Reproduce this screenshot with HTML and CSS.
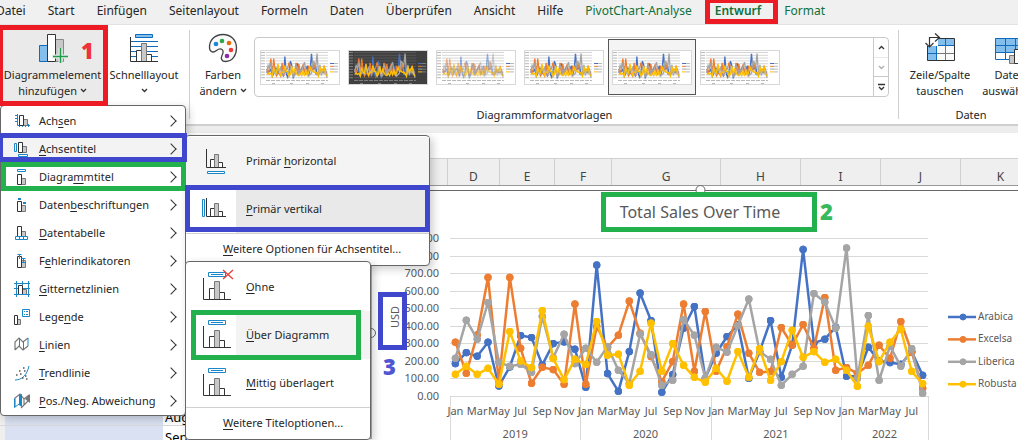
FILE: index.html
```html
<!DOCTYPE html>
<html lang="de">
<head>
<meta charset="utf-8">
<title>Total Sales Over Time</title>
<link rel="stylesheet" href="styles.css">
</head>
<body>
<nav class="tabs">
  <a href="#">Datei</a><a href="#">Start</a><a href="#">Einfügen</a><a href="#">Seitenlayout</a><a href="#">Formeln</a><a href="#">Daten</a><a href="#">Überprüfen</a><a href="#">Ansicht</a><a href="#">Hilfe</a><a href="#" class="ctx">PivotChart-Analyse</a><a href="#" class="ctx active">Entwurf</a><a href="#" class="ctx">Format</a>
</nav>

<section class="ribbon">
  <div class="group layouts">
    <button class="big pressed">
      <svg width="30" height="30" viewBox="0 0 30 30"><path d="M1.500 12.500h8v16h-8z" fill="#83beec" stroke="#0f6cbd"/><path d="M17.500 6.500h8v22h-8z" fill="#c8c8c8" stroke="#888"/><path d="M9.500 1.500h8v27h-8z" fill="#fff" stroke="#333"/><path d="M22.500 15v17M14 23.500h16" stroke="#eaeaea" stroke-width="4"/><path d="M22.500 15v15M15 23.500h15" stroke="#1e9e48" stroke-width="1.500"/></svg>
      <span>Diagrammelement<br>hinzufügen <svg class="chev" width="7" height="5" viewBox="0 0 7 5"><path d="M1 1l2.500 2.500L6 1"/></svg></span>
    </button>
    <button class="big quick">
      <svg width="30" height="30" viewBox="0 0 30 30"><path d="M6.500 1.500h17v3h-17z" fill="#83beec" stroke="#0f6cbd"/><path d="M2 8.500h27M2 13.500h27M2 18.500h27M2 23.500h27" stroke="#0f6cbd"/><path d="M7.500 17.500h5v11h-5zM17.500 21.500h5v7h-5z" fill="#fff" stroke="#333"/><path d="M12.500 10.500h5v18h-5z" fill="#c8c8c8" stroke="#777"/><path d="M1.500 4v24.500H29" fill="none" stroke="#333"/></svg>
      <span>Schnelllayout<br><svg class="chev" width="7" height="5" viewBox="0 0 7 5"><path d="M1 1l2.500 2.500L6 1"/></svg></span>
    </button>
  </div>
  <div class="group styles">
    <div class="row">
      <button class="big colors">
        <svg width="30" height="30" viewBox="0 0 30 30"><path d="M1.500 15C1 7 7 1.500 15 1.500S28.500 7 28.500 15c0 7-4 13.500-11 13.500-4 0-5-3-3.500-6s2-4.500 0-6c-2-1.400-3.500-.5-5.500 1-3 2.500-6.500 2-7-2.500z" fill="#fafafa" stroke="#444" stroke-width="1.300"/><circle cx="8" cy="11" r="2.300" fill="#1b87d6"/><circle cx="14" cy="8" r="2.300" fill="#2ba84a"/><circle cx="21" cy="10" r="2.300" fill="#e86c00"/><circle cx="23" cy="17" r="2.300" fill="#ee3a3a"/><circle cx="19" cy="23" r="2.300" fill="#9029a8"/></svg>
        <span>Farben<br>ändern <svg class="chev" width="7" height="5" viewBox="0 0 7 5"><path d="M1 1l2.500 2.500L6 1"/></svg></span>
      </button>
      <div class="gallery">
        <div class="thumbs" id="thumbs"></div>
        <div class="spin">
          <button aria-label="Nach oben"><svg class="chev" width="7" height="5" viewBox="0 0 7 5"><path d="M1 4l2.500-2.500L6 4"/></svg></button>
          <button aria-label="Nach unten" disabled><svg class="chev" width="7" height="5" viewBox="0 0 7 5"><path d="M1 1l2.500 2.500L6 1"/></svg></button>
          <button aria-label="Weitere"><svg class="chev" width="7" height="8" viewBox="0 0 7 8"><path d="M0 1.500h7M1 4l2.500 2.500L6 4"/></svg></button>
        </div>
      </div>
    </div>
    <div class="caption">Diagrammformatvorlagen</div>
  </div>
  <div class="group data">
    <div class="row">
      <button class="big swap">
        <svg width="32" height="30" viewBox="0 0 32 30"><path d="M3.500 5.500h27v22h-27z" fill="#fafafa"/><path d="M3.500 5.500h27v7h-18v15h-9z" fill="#83beec"/><path d="M12.500 5.500v22M21.500 5.500v22M3.500 12.500h27M3.500 20.500h27" stroke="#777"/><path d="M12.500 5.500v22M3.500 12.500h27M3.500 20.500h9M21.500 5.500v7" stroke="#0f6cbd"/><path d="M3.500 5.500h27v22h-27z" fill="none" stroke="#333"/><path d="M0 0h14v13H0z" fill="#fff"/><path d="M5.500 14V4.500H15M11 .500l4.500 4-4.500 4M1.500 10l4 4 4-4" fill="none" stroke="#333" stroke-width="1.200"/></svg>
        <span>Zeile/Spalte<br>tauschen</span>
      </button>
      <button class="big select">
        <svg width="32" height="30" viewBox="0 0 32 30"><path d="M1.500 5.500h30v21h-30z" fill="#fff" stroke="#0f6cbd"/><path d="M2 6h29v13H2z" fill="#83beec"/><path d="M1.500 5.500h30M1.500 12.500h30M1.500 19.500h30M11.500 5.500v21M21.500 5.500v14" fill="none" stroke="#0f6cbd"/><path d="M15.500 22.500h5v8h-5z" fill="#c8c8c8" stroke="#777"/><path d="M20.500 16.500h5v14h-5z" fill="#fff" stroke="#333"/><path d="M25.500 19.500h5v11h-5z" fill="#83beec" stroke="#0f6cbd"/></svg>
        <span>Daten<br>auswählen</span>
      </button>
    </div>
    <div class="caption">Daten</div>
  </div>
</section>

<div class="formula"></div>

<main class="sheet">
  <div class="heads"><span class="c0"></span><span>D</span><span class="e">E</span><span class="f">F</span><span class="g">G</span><span class="h">H</span><span class="i">I</span><span class="i">J</span><span class="k">K</span></div>
  <div class="body">
    <div class="cells" id="cells"></div>
    <svg class="chart" id="chart" viewBox="0 0 653 250" role="img" aria-label="Total Sales Over Time">
      <defs>
        <marker id="m0" class="s0" markerUnits="userSpaceOnUse" markerWidth="8" markerHeight="8" refX="4" refY="4"><circle cx="4" cy="4" r="3.500"/></marker>
        <marker id="m1" class="s1" markerUnits="userSpaceOnUse" markerWidth="8" markerHeight="8" refX="4" refY="4"><circle cx="4" cy="4" r="3.500"/></marker>
        <marker id="m2" class="s2" markerUnits="userSpaceOnUse" markerWidth="8" markerHeight="8" refX="4" refY="4"><circle cx="4" cy="4" r="3.500"/></marker>
        <marker id="m3" class="s3" markerUnits="userSpaceOnUse" markerWidth="8" markerHeight="8" refX="4" refY="4"><circle cx="4" cy="4" r="3.500"/></marker>
      </defs>
    </svg>
  </div>
</main>

<div class="menu main-menu" role="menu">
  <button><svg viewBox="0 0 16 16"><path d="M3.500 1v11.500H16M1 2.500h3M1 5.500h3M1 8.500h3M5.500 11v3M8.500 11v3M11.500 11v3M14.500 11v3" class="b"/><path d="M9.500 6.500h4v6h-4z" class="g"/><path d="M5.500 2.500h4v10h-4z" class="k"/></svg><span>Ach<u>s</u>en</span></button>
  <button class="hot"><svg viewBox="0 0 16 16"><path d="M.500 2.500h2v8h-2zM4.500 13.500h9v2h-9z" class="b w"/><path d="M8.500 5.500h4v6h-4z" class="g"/><path d="M4.500 1.500h4v10h-4z" class="k"/></svg><span><u>A</u>chsentitel</span></button>
  <button><svg viewBox="0 0 16 16"><path d="M3.500.500h8v2h-8z" class="b w"/><path d="M7.500 9.500h4v6h-4z" class="g"/><path d="M3.500 5.500h4v10h-4z" class="k"/></svg><span>Diagra<u>m</u>mtitel</span></button>
  <button><svg viewBox="0 0 16 16"><path d="M4 2h3M9 6h3" class="b thick"/><path d="M7.500 8.500h4v6h-4z" class="g"/><path d="M3.500 4.500h4v10h-4z" class="k"/></svg><span>Daten<u>b</u>eschriftungen</span></button>
  <button><svg viewBox="0 0 16 16"><path d="M7.500 6.500h4v5h-4z" class="g"/><path d="M3.500 1.500h4v10h-4z" class="k"/><path d="M1.500 11.500h12v3h-12zM5.500 11.500v3M9.500 11.500v3" class="b w"/></svg><span><u>D</u>atentabelle</span></button>
  <button><svg viewBox="0 0 16 16"><path d="M7.500 7.500h4v7h-4z" class="g"/><path d="M3.500 3.500h4v11h-4z" class="k"/><path d="M5.500 1v5M3.500 1.500h4M9.500 5v5M7.500 5.500h4M8 9.500h3" class="b"/></svg><span>F<u>e</u>hlerindikatoren</span></button>
  <button><svg viewBox="0 0 16 16"><path d="M8.500 8.500h4v5h-4z" class="g"/><path d="M4.500 4.500h4v9h-4z" class="k"/><path d="M0 2.500h16M0 13.500h16M2.500 0v16M8.500 0v4M14.500 0v16M0 7.500h4M9 7.500h7" class="b"/></svg><span><u>G</u>itternetzlinien</span></button>
  <button><svg viewBox="0 0 16 16"><path d="M8.500.500h7v7h-7z" class="b w"/><path d="M10 2.500h1M12 2.500h2M10 5.500h1M12 5.500h2" class="b"/><path d="M3.500 10.500h3v5h-3z" class="g"/><path d="M.500 6.500h3v9h-3z" class="k"/></svg><span>Lege<u>n</u>de</span></button>
  <button><svg viewBox="0 0 16 16"><path d="M1 13V5l4-4 4 4 5-4M1 13l4-4 4 4 5-4" class="l"/><path d="M5.500 1v8M9.500 5v8M14 1v8" class="b"/></svg><span><u>L</u>inien</span></button>
  <button><svg viewBox="0 0 16 16"><path d="M1 15C8 15 13 10 15 1" class="b"/><path d="M2 10h1.500M5 6h1.500M6 9h1.500M9 3h1.500M8 13h1.500M11 11h1.500M12 14h1.500M10 6h1.500" class="dot"/></svg><span><u>T</u>rendlinie</span></button>
  <button><svg viewBox="0 0 16 16"><path d="M1 14V5l5-4 4 5v6l-3 3M10 6l5-4M10 12l5-5" class="l"/><path d="M5 2l3-1v13l-3-2z" fill="#1b87c9"/><path d="M.500 5.500v9L5 11" class="b"/><path d="M11 6l5-5v9z" fill="#777"/></svg><span><u>P</u>os./Neg. Abweichung</span></button>
</div>

<div class="menu sub axis" role="menu">
  <button class="item hover"><svg viewBox="0 0 28 28"><path d="M7.500 12.500h4v8h-4zM15.500 15.500h4v5h-4z" class="k"/><path d="M11.500 7.500h4v13h-4z" class="g"/><path d="M3.500 2v18.500H23" class="k n"/><path d="M4.500 24.500h17v2h-17z" class="b w"/></svg><span>Primär <u>h</u>orizontal</span></button>
  <button class="item chosen"><svg viewBox="0 0 28 28"><path d="M7.500 13.500h4v8h-4zM15.500 16.500h4v5h-4z" class="k"/><path d="M11.500 8.500h4v13h-4z" class="g"/><path d="M3.500 3v18.500H23" class="k n"/><path d="M-.500 4.500h2v17h-2z" class="b w"/></svg><span><u>P</u>rimär vertikal</span></button>
  <button class="more"><span><u>W</u>eitere Optionen für Achsentitel...</span></button>
</div>

<div class="menu sub title" role="menu">
  <button class="item"><svg viewBox="0 0 28 28"><path d="M6.500 15.500h5v11h-5zM16.500 19.500h5v7h-5z" class="k"/><path d="M11.500 8.500h5v18h-5z" class="g"/><path d="M.500 5v21.500H28" class="k n"/><path d="M5.500-.500h17v4h-17zM8 1.500h12" class="b w"/><path d="M20-3l10 9M30-3L20 6" stroke="#ee3a3a" stroke-width="1.300"/></svg><span><u>O</u>hne</span></button>
  <button class="item chosen"><svg viewBox="0 0 28 28"><path d="M6.500 15.500h5v11h-5zM16.500 19.500h5v7h-5z" class="k"/><path d="M11.500 9.500h5v17h-5z" class="g"/><path d="M.500 5v21.500H28" class="k n"/><path d="M5.500-.500h17v4h-17zM8 1.500h12" class="b w"/></svg><span><u>Ü</u>ber Diagramm</span></button>
  <button class="item"><svg viewBox="0 0 28 28"><path d="M6.500 15.500h5v11h-5zM16.500 19.500h5v7h-5z" class="k"/><path d="M11.500 9.500h5v17h-5z" class="g"/><path d="M.500 5v21.500H28" class="k n"/><path d="M5.500-.500h17v4h-17zM8 1.500h12" class="b w"/></svg><span><u>M</u>ittig überlagert</span></button>
  <button class="more"><span><u>W</u>eitere Titeloptionen...</span></button>
</div>

<div class="mark red m-add"></div>
<div class="mark red m-tab"></div>
<div class="mark blue m-axis"></div>
<div class="mark green m-title"></div>
<div class="mark blue m-vert"></div>
<div class="mark green m-over"></div>
<div class="mark green m-heading"></div>
<div class="mark blue m-usd"></div>
<b class="num n1">1</b>
<b class="num n2">2</b>
<b class="num n3">3</b>
<script src="chart.js"></script>
</body>
</html>
```
FILE: styles.css
```css
* { box-sizing: border-box; }
body {
  margin: 0;
  position: relative;
  min-height: 100vh;
  overflow: hidden;
  background: #fff;
  color: #262626;
  font: 12px/16px "Noto Sans", "Open Sans", sans-serif;
  display: flex;
  flex-direction: column;
}
button { font: inherit; color: inherit; border: 0; background: none; padding: 0; margin: 0; }
svg { overflow: visible; flex: none; }
.chev path { fill: none; stroke: #333; stroke-width: 1.3; }

.tabs { display: flex; gap: 22px; height: 24px; padding-top: 3px; background: #f0f0f0; white-space: nowrap; }
.tabs a { color: #262626; text-decoration: none; }
.tabs a:first-child { margin-left: -4px; }
.tabs .ctx { color: #0f703b; }
.tabs .active { font-weight: 600; padding: 0 1px; }

.ribbon { display: flex; height: 102px; background: #fff; border-top: 1px solid #e2e2e2; border-bottom: 2px solid #cfcfcf; overflow: hidden; font-size: 11px; }
.group { position: relative; display: flex; flex: none; }
.styles, .data { flex-direction: column; }
.group::after { content: ""; position: absolute; right: 0; top: 5px; bottom: 5px; border-right: 1px solid #cfcfcf; }
.layouts { width: 190px; }
.styles { width: 709px; }
.data { width: 144px; }
.row { display: flex; height: 82px; }
.big { display: flex; flex-direction: column; align-items: center; gap: 4px; padding-top: 8px; white-space: nowrap; text-align: center; }
.big .chev { vertical-align: 2px; }
.pressed { width: 105px; height: 80px; background: #eaeaea; }
.quick { width: 78px; }
.colors { width: 66px; }
.caption { text-align: center; }
.swap { width: 82px; }
.select { width: 58px; }
.gallery { display: flex; height: 60px; margin-top: 12px; margin-right: 10px; flex: 1; border: 1px solid #c9c9c9; border-radius: 4px; margin-left: -2px; }
.thumbs { display: flex; flex: 1; padding: 1px; }
.thumb { width: 88px; height: 56px; padding: 10px 3px; border: 1px solid transparent; }
.thumb svg { display: block; width: 80px; height: 35px; background: #fff; outline: 1px solid #d8d8d8; outline-offset: -1px; }
.thumb.on { border-color: #555; background: #f4f4f4; }
.thumb.dark svg { background: #404040; }
.thumb .grid { stroke: #d5d5d5; }
.thumb.dark .grid { stroke: #555; }
.thumb.pale .line { opacity: .55; }
.thumb .line { stroke-width: 1.3; fill: none; }
.thumb .tick { stroke: #999; stroke-width: .7; stroke-dasharray: 4 1; }
.spin { display: flex; flex-direction: column; width: 15px; border-left: 1px solid #c9c9c9; }
.spin button { display: flex; flex: 1; align-items: center; justify-content: center; }
.spin button + button { border-top: 1px solid #c9c9c9; }
.spin button:disabled { opacity: .4; }

.formula { height: 33px; background: #fff; border-top: 7px solid #ededed; border-bottom: 1px solid #d0d0d0; }
.heads { display: flex; height: 27px; background: #efefef; border-bottom: 1px solid #999; color: #444; line-height: 36px; text-align: center; overflow: hidden; }
.heads span { width: 52px; flex: none; border-right: 1px solid #d0d0d0; }
.heads .c0 { width: 448px; }
.heads .e { width: 55px; }
.heads .f { width: 57px; }
.heads .g { width: 109px; }
.heads .h, .heads .i { width: 80px; }
.heads .k { width: 80px; }
.sheet { flex: 1; }
.body { display: flex; height: 254px; }
.cells { width: 365px; flex: none; }
.line-row { display: flex; height: 20px; border-bottom: 1px solid #d9d9d9; font-size: 13px; color: #000; }
.line-row i { width: 5px; background: #efefef; }
.line-row em { width: 158px; background: #d9e1f2; }
.line-row span { padding-left: 2px; align-self: flex-end; }
.chart { display: block; flex: 1 1 0; min-width: 0; align-self: flex-start; margin-top: 4px; background: #fff; font-size: 11px; fill: #595959; }
.chart .frame { fill: none; stroke: #666; }
.chart .grid { stroke: #d9d9d9; }
.chart .line { fill: none; stroke-width: 2.5; stroke-linejoin: round; }
.chart .heading { font-size: 16px; }
.chart .key { font-size: 10px; }
.chart .end { text-anchor: end; }
.chart .mid { text-anchor: middle; }
.s0 { fill: #4472c4; stroke: #4472c4; }
.s1 { fill: #ed7d31; stroke: #ed7d31; }
.s2 { fill: #a5a5a5; stroke: #a5a5a5; }
.s3 { fill: #ffc000; stroke: #ffc000; }
marker { stroke: none; }

.menu { position: absolute; background: #fff; border: 1px solid #666; border-radius: 4px; box-shadow: 3px 3px 8px #0003; display: flex; flex-direction: column; white-space: nowrap; font-size: 11px; }
.menu button { display: flex; align-items: center; text-align: left; }
.menu u { text-underline-offset: 2px; }
.menu .b { fill: none; stroke: #1b87c9; }
.menu .w { fill: #fff; }
.menu .k { fill: #fff; stroke: #333; }
.menu .n { fill: none; }
.menu .g { fill: #c8c8c8; stroke: #777; }
.menu .l { fill: none; stroke: #777; stroke-width: 1.2; }
.menu .thick { stroke-width: 2; }
.menu .dot { stroke: #555; stroke-width: 1.5; }
.main-menu { left: 0; top: 105px; width: 186px; padding-top: 1px; }
.main-menu button { height: 28px; padding: 0 10px 0 13px; }
.main-menu button svg { width: 16px; height: 16px; }
.main-menu span { margin-left: 9px; flex: 1; }
.main-menu button::after { content: ""; width: 7px; height: 7px; border: solid #333; border-width: 1px 1px 0 0; transform: rotate(45deg); }
.main-menu .hot { background: #f3f3f3; }
.axis { left: 185px; top: 135px; width: 245px; padding: 1px 0; }
.title { left: 185px; top: 261px; width: 186px; padding: 1px 0; }
.sub .item { height: 48px; }
.sub .item svg { width: 28px; height: 28px; margin-left: 17px; }
.sub .item span { margin-left: 15px; }
.axis .hover { background: #f4f4f4; }
.axis .chosen { background: linear-gradient(90deg, #fff 50px, #e9e9e9 50px); }
.title .chosen { background: linear-gradient(90deg, #fff 50px, #f3f3f3 50px); }
.sub .more { height: 31px; border-top: 1px solid #d0d0d0; padding-left: 37px; }

.mark { position: absolute; border: 5px solid; }
.red { border-color: #ed1c24; }
.blue { border-color: #3f48cc; }
.green { border-color: #22b14c; }
.m-add { left: -2px; top: 25px; width: 110px; height: 81px; }
.m-tab { left: 705px; top: -2px; width: 73px; height: 26px; }
.m-axis { left: -2px; top: 133px; width: 189px; height: 29px; }
.m-title { left: 1px; top: 162px; width: 185px; height: 29px; }
.m-vert { left: 185px; top: 185px; width: 245px; height: 47px; }
.m-over { left: 191px; top: 310px; width: 170px; height: 50px; }
.m-heading { left: 601px; top: 192px; width: 216px; height: 40px; }
.m-usd { left: 378px; top: 292px; width: 29px; height: 58px; }
.num { position: absolute; font-size: 22px; line-height: 24px; font-weight: 900; }
.n1 { left: 81px; top: 38px; color: #f0323a; }
.n2 { left: 820px; top: 199px; color: #38b95e; }
.n3 { left: 383px; top: 354px; color: #4f57d0; }
```
FILE: chart.js
```javascript
// Monthly marker heights from January 2019 on: 220 is 900.00, 693 is 0.00.
const series = [
  ["Arabica", [596,563,574,532,663,606,512,518,600,536,531,553,667,301,626,679,560,385,467,682,629,490,425,640,565,515,480,640,560,467,637,540,254,535,523,487,634,634,547,588,593,598,560,631]],
  ["Excelsa", [532,625,510,338,650,338,550,655,607,614,658,418,658,485,548,511,409,505,575,650,590,418,619,440,619,545,448,565,622,620,488,541,479,550,398,616,608,625,601,541,580,470,562,670]],
  ["Liberica", [580,466,523,413,592,604,598,622,455,578,508,596,550,592,545,616,655,508,569,661,646,464,511,640,547,562,482,403,560,583,661,628,604,386,412,490,250,640,452,646,544,604,551,685]],
  ["Robusta", [628,604,628,610,658,500,588,608,437,581,644,583,598,470,571,568,661,619,475,619,536,601,637,652,610,649,560,637,551,646,590,496,577,560,592,583,616,664,484,590,532,493,619,656]]
];
const TOP = 48, BOTTOM = 206, LEFT = 85, RIGHT = 563;
const step = (RIGHT - LEFT) / 44;
const scale = (v, top, bottom) => top + (v - 220) / 473 * (bottom - top);
const text = (x, y, s, cls, extra = "") => `<text x="${x}" y="${y}" class="${cls}" ${extra}>${s}</text>`;

let out = `<path class="frame" d="M700 .5H6V249"/><circle class="frame" cx="335.500" cy="0" r="4.500" style="fill:#fff"/><circle class="frame" cx="6" cy="143" r="4.500"/>`;
for (let i = 0; i <= 9; i++) {
  const y = Math.round(BOTTOM - i * (BOTTOM - TOP) / 9) + .5;
  out += `<path class="grid" d="M${LEFT} ${y}H${RIGHT}"/>` + text(74, y + 3, (i * 100) + (i ? ".00" : ".00"), "end");
}
for (const [year, from, to] of [[2019, 0, 12], [2020, 12, 24], [2021, 24, 36], [2022, 36, 44]]) {
  const x = Math.round(LEFT + from * step) + .5;
  out += `<path class="grid" d="M${x} ${BOTTOM}V250"/>` + text(LEFT + (from + to) / 2 * step, 248, year, "mid");
  ["Jan", "Mar", "May", "Jul", "Sep", "Nov"].forEach((m, k) => {
    if (from + k * 2 < to) out += text(LEFT + (from + k * 2 + .5) * step, 225, m, "mid");
  });
}
out += `<path class="grid" d="M${RIGHT}.5 ${BOTTOM}V250"/>`;
series.forEach(([name, vals], s) => {
  const pts = vals.map((v, i) => `${(LEFT + (i + .5) * step).toFixed(1)},${scale(v, TOP, BOTTOM).toFixed(1)}`).join(" ");
  const m = `url(#m${s})`;
  out += `<polyline class="line s${s}" style="fill:none" points="${pts}" marker-start="${m}" marker-mid="${m}" marker-end="${m}"/>`;
  const y = 127 + s * 22.4;
  out += `<path class="line s${s}" d="M583 ${y}H611"/><circle class="s${s}" cx="598" cy="${y}" r="3"/>` + text(613, y + 3, name, "key");
});
out += text(335, 28, "Total Sales Over Time", "heading mid") + text(0, 0, "USD", "mid", 'transform="translate(34 127) rotate(-90)"');
document.getElementById("chart").insertAdjacentHTML("beforeend", out);

const thumb = cls => {
  let g = "";
  for (let i = 0; i <= 9; i++) g += `<path class="grid" d="M6 ${2.5 + i * 2.8}H68"/><path class="tick" d="M1 ${2.5 + i * 2.8}h4"/>`;
  series.forEach(([, vals], s) => {
    g += `<polyline class="line s${s}" style="fill:none" points="${vals.map((v, i) => `${(6.7 + i * 1.4).toFixed(1)},${scale(v, 2, 28).toFixed(1)}`).join(" ")}"/>`;
    g += `<path class="s${s}" d="M70 ${13.5 + s * 2.8}h4"/><path class="tick" d="M74 ${13.5 + s * 2.8}h4"/>`;
  });
  return `<div class="thumb ${cls}"><svg viewBox="0 0 80 35">${g}<path class="tick" d="M6 30.500h62M12 33.500h3M30 33.500h3M46 33.500h3M61 33.500h3"/></svg></div>`;
};
document.getElementById("thumbs").innerHTML = ["", "dark", "pale", "", "on", ""].map(thumb).join("");

const months = Array(11).fill("").concat(["Aug", "Sep"]);
document.getElementById("cells").innerHTML = months.map(m => `<div class="line-row"><i></i><em></em><span>${m}</span></div>`).join("");
```
